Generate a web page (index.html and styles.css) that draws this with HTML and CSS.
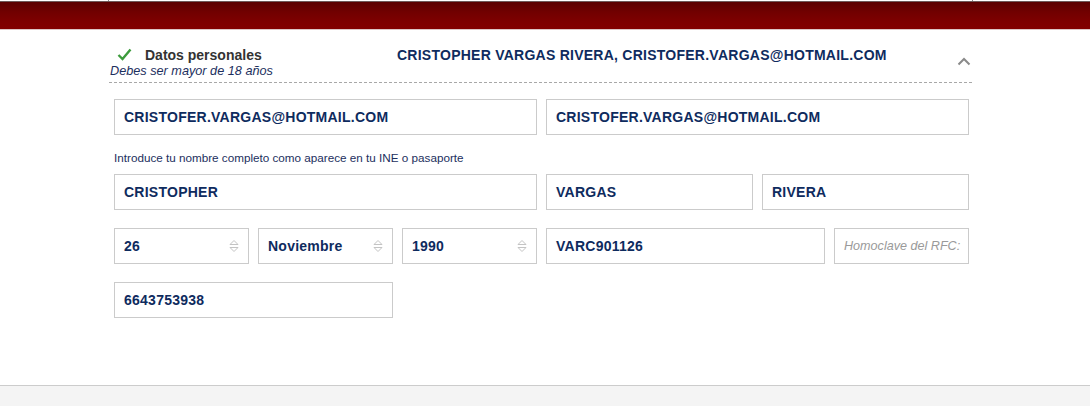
FILE: index.html
```html
<!DOCTYPE html>
<html lang="es">
<head>
<meta charset="utf-8">
<title>Datos personales</title>
<link rel="stylesheet" href="styles.css">
</head>
<body>
<div class="topstrip"><div class="ticks"></div></div>
<div class="redbar"></div>
<main class="main">
  <section class="panel">
    <header class="panel-head">
      <div class="head-left">
        <div class="head-title">
          <svg class="check" width="15" height="13" viewBox="0 0 15 13"><path d="M1.5 7 L5.5 11 L13.5 1.5" fill="none" stroke="#3c9b3c" stroke-width="2.4"/></svg>
          <span>Datos personales</span>
        </div>
        <div class="head-sub">Debes ser mayor de 18 años</div>
      </div>
      <div class="head-summary">CRISTOPHER VARGAS RIVERA, CRISTOFER.VARGAS@HOTMAIL.COM</div>
      <svg class="chevron" width="14" height="9" viewBox="0 0 14 9"><path d="M1.5 7.5 L7 2 L12.5 7.5" fill="none" stroke="#8a8a8a" stroke-width="2"/></svg>
    </header>

    <div class="grid row-first">
      <div class="field span6">CRISTOFER.VARGAS@HOTMAIL.COM</div>
      <div class="field span6">CRISTOFER.VARGAS@HOTMAIL.COM</div>
    </div>
    <p class="hint">Introduce tu nombre completo como aparece en tu INE o pasaporte</p>
    <div class="grid">
      <div class="field span6">CRISTOPHER</div>
      <div class="field span3">VARGAS</div>
      <div class="field span3">RIVERA</div>

      <div class="field select span2"><span>26</span><svg class="arrows" width="10" height="14" viewBox="0 0 10 14"><path d="M1 5.5 L5 1.5 L9 5.5 Z M1 8.5 L5 12.5 L9 8.5 Z" fill="none" stroke="#c4c4c4" stroke-width="1"/></svg></div>
      <div class="field select span2"><span>Noviembre</span><svg class="arrows" width="10" height="14" viewBox="0 0 10 14"><path d="M1 5.5 L5 1.5 L9 5.5 Z M1 8.5 L5 12.5 L9 8.5 Z" fill="none" stroke="#c4c4c4" stroke-width="1"/></svg></div>
      <div class="field select span2"><span>1990</span><svg class="arrows" width="10" height="14" viewBox="0 0 10 14"><path d="M1 5.5 L5 1.5 L9 5.5 Z M1 8.5 L5 12.5 L9 8.5 Z" fill="none" stroke="#c4c4c4" stroke-width="1"/></svg></div>
      <div class="field span4">VARC901126</div>
      <div class="field placeholder span2">Homoclave del RFC:</div>

      <div class="field span4">6643753938</div>
    </div>
  </section>
</main>
<footer class="footer"></footer>
</body>
</html>
```
FILE: styles.css
```css
html, body {
  margin: 0;
  padding: 0;
  background: #fff;
  font-family: "Liberation Sans", Arial, sans-serif;
  overflow: hidden;
}

.topstrip {
  height: 1px;
  background: #fff;
}

.ticks {
  margin-left: 108px;
  width: 863px;
  height: 1px;
  border-left: 1px solid #888;
  border-right: 1px solid #888;
}

.redbar {
  height: 27px;
  border-top: 1px solid #6e5a5a;
  border-bottom: 1px solid #dcc6c6;
  background: linear-gradient(to bottom, #5a0000 0%, #700000 35%, #7d0000 70%, #820000 100%);
}

.main {
  height: 355px;
}

.panel {
  margin-left: 109px;
  width: 863px;
  padding-top: 16px;
}

.panel-head {
  display: flex;
  align-items: flex-start;
  border-bottom: 1px dashed #a8a8a8;
  padding-bottom: 3px;
}

.head-left {
  width: 288px;
  flex: none;
}

.head-title {
  display: flex;
  align-items: center;
  height: 17px;
  padding-left: 8px;
  font-size: 14px;
  font-weight: bold;
  color: #333;
}

.check {
  margin-right: 13px;
  margin-top: -1px;
}

.head-sub {
  font-size: 12.7px;
  font-style: italic;
  color: #1c2f5e;
  line-height: 16px;
  padding-left: 1px;
}

.head-summary {
  font-size: 14px;
  letter-spacing: 0.25px;
  font-weight: bold;
  color: #0e2b5e;
  line-height: 17px;
  padding-top: 1px;
}

.chevron {
  margin-left: auto;
  margin-right: 1px;
  margin-top: 11px;
}

.grid {
  display: grid;
  grid-template-columns: repeat(12, 63px);
  column-gap: 9px;
  row-gap: 18px;
  margin-left: 5px;
}

.row-first {
  margin-top: 16px;
}

.hint {
  margin: 16px 0 10px 5px;
  font-size: 11.7px;
  line-height: 13px;
  color: #1c2f5e;
}

.field {
  height: 36px;
  box-sizing: border-box;
  border: 1px solid #cbcbcb;
  padding: 0 9px;
  display: flex;
  align-items: center;
  font-size: 14px;
  letter-spacing: 0.25px;
  font-weight: bold;
  color: #0e2b5e;
  white-space: nowrap;
  overflow: hidden;
  background: #fff;
}

.select {
  justify-content: space-between;
  padding-right: 9px;
}

.placeholder {
  font-weight: normal;
  font-style: italic;
  font-size: 12.6px;
  letter-spacing: 0;
  color: #9a9a9a;
}

.span2 { grid-column: span 2; }
.span3 { grid-column: span 3; }
.span4 { grid-column: span 4; }
.span6 { grid-column: span 6; }

.footer {
  height: 20px;
  border-top: 1px solid #cccccc;
  background: #f4f4f4;
}
```
